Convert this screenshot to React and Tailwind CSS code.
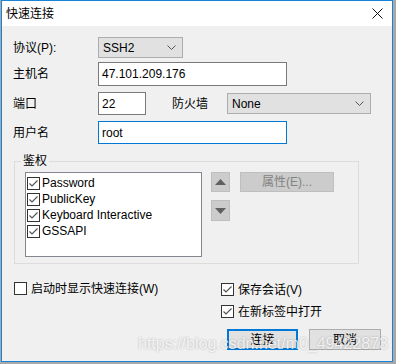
import React from "react";

const F = "font-['Liberation_Sans','Noto_Sans_CJK_SC',sans-serif]";

function Check({ checked }) {
  return (
    <span className="w-[13px] h-[13px] border border-[#333333] bg-white flex items-center justify-center shrink-0">
      {checked && (
        <svg width="11" height="11" viewBox="0 0 11 11">
          <path d="M1.5 5.5 L4 8 L9.5 2.5" stroke="#555555" strokeWidth="1.2" fill="none" />
        </svg>
      )}
    </span>
  );
}

function Chevron() {
  return (
    <svg width="9" height="5" viewBox="0 0 9 5">
      <path d="M0.5 0.5 L4.5 4.5 L8.5 0.5" stroke="#555555" strokeWidth="1" fill="none" />
    </svg>
  );
}

function Select({ w, value }) {
  return (
    <div className={`${w} h-[21px] bg-[#e1e1e1] border border-[#adadad] flex items-center justify-between pl-[4px] pr-[6px] text-[12px] text-black`}>
      <span>{value}</span>
      <Chevron />
    </div>
  );
}

function Label({ children }) {
  return <div className="w-[85px] shrink-0 text-[12px] text-black">{children}</div>;
}

export default function App() {
  const items = ["Password", "PublicKey", "Keyboard Interactive", "GSSAPI"];
  return (
    <div className={`relative w-[396px] h-[364px] bg-[#a8a8a8] overflow-hidden ${F}`}>
      <div className="ml-[1px] w-[392px] h-[362px] border border-[#1883d7] bg-[#f0f0f0] flex flex-col">
        {/* title bar */}
        <div className="h-[25px] bg-white flex items-center justify-between pl-[4px] pr-[9px] shrink-0">
          <span className="text-[12px] text-black leading-none">快速连接</span>
          <svg width="11" height="11" viewBox="0 0 11 11">
            <path d="M0.5 0.5 L10.5 10.5 M10.5 0.5 L0.5 10.5" stroke="#111111" strokeWidth="1" fill="none" />
          </svg>
        </div>

        {/* body */}
        <div className="flex flex-col pl-[11px] pt-[11px]">
          <div className="flex items-center h-[21px]">
            <Label>协议(P):</Label>
            <Select w="w-[85px]" value="SSH2" />
          </div>
          <div className="flex items-center h-[24px] mt-[4px]">
            <Label>主机名</Label>
            <div className="w-[189px] h-[24px] bg-white border border-[#7a7a7a] flex items-center pl-[3px] text-[12px] text-black">
              47.101.209.176
            </div>
          </div>
          <div className="flex items-center h-[23px] mt-[6px]">
            <Label>端口</Label>
            <div className="w-[48px] h-[23px] bg-white border border-[#7a7a7a] flex items-center pl-[3px] text-[12px] text-black">
              22
            </div>
            <div className="ml-[26px] w-[55px] text-[12px] text-black">防火墙</div>
            <Select w="w-[144px]" value="None" />
          </div>
          <div className="flex items-center h-[23px] mt-[6px]">
            <Label>用户名</Label>
            <div className="w-[189px] h-[23px] bg-white border border-[#0078d7] flex items-center pl-[3px] text-[12px] text-black">
              root
            </div>
          </div>

          {/* group box */}
          <div className="relative mt-[17px] ml-[1px] w-[345px] h-[103px] border border-[#dcdcdc] flex items-start pl-[10px] pt-[10px]">
            <span className="absolute -top-[10px] left-[6px] px-[2px] bg-[#f0f0f0] text-[12px] text-black leading-[18px]">鉴权</span>
            <div className="w-[177px] h-[85px] bg-white border border-[#828790] flex flex-col pl-[1px] pt-[2px]">
              {items.map((t) => (
                <div key={t} className="flex items-center h-[16px] gap-[2px]">
                  <Check checked />
                  <span className="text-[12px] text-black leading-none">{t}</span>
                </div>
              ))}
            </div>
            <div className="ml-[9px] flex flex-col">
              <div className="w-[19px] h-[20px] bg-[#cccccc] border border-[#bfbfbf] flex items-center justify-center">
                <svg width="11" height="6" viewBox="0 0 11 6"><path d="M5.5 0 L11 6 L0 6 Z" fill="#606060" /></svg>
              </div>
              <div className="mt-[8px] w-[19px] h-[21px] bg-[#cccccc] border border-[#bfbfbf] flex items-center justify-center">
                <svg width="11" height="6" viewBox="0 0 11 6"><path d="M0 0 L11 0 L5.5 6 Z" fill="#606060" /></svg>
              </div>
            </div>
            <div className="ml-[10px] w-[94px] h-[20px] bg-[#cccccc] border border-[#bfbfbf] flex items-center justify-center text-[12px] text-[#838383]">
              属性(E)...
            </div>
          </div>

          {/* bottom */}
          <div className="flex mt-[18px] ml-[1px]">
            <div className="w-[207px] flex items-center h-[13px] gap-[4px]">
              <Check />
              <span className="text-[12px] text-black leading-none">启动时显示快速连接(W)</span>
            </div>
            <div className="flex flex-col">
              <div className="flex items-center h-[13px] gap-[4px] mt-[1px]">
                <Check checked />
                <span className="text-[12px] text-black leading-none">保存会话(V)</span>
              </div>
              <div className="flex items-center h-[13px] gap-[4px] mt-[9px]">
                <Check checked />
                <span className="text-[12px] text-black leading-none">在新标签中打开</span>
              </div>
              <div className="flex mt-[11px] ml-[6px] gap-[11px]">
                <div className="w-[71px] h-[21px] bg-[#e1e1e1] border-2 border-[#0078d7] flex items-center justify-center text-[12px] text-black">
                  连接
                </div>
                <div className="w-[72px] h-[21px] bg-[#e1e1e1] border border-[#adadad] flex items-center justify-center text-[12px] text-black">
                  取消
                </div>
              </div>
            </div>
          </div>
        </div>
      </div>
      <div className="absolute left-[138px] top-[332px] text-[16px] font-['Liberation_Sans',sans-serif] text-white/80 [text-shadow:0_0_2px_rgba(0,0,0,0.3)] whitespace-nowrap pointer-events-none">
        https://blog.csdn.net/m0_49422873
      </div>
    </div>
  );
}
